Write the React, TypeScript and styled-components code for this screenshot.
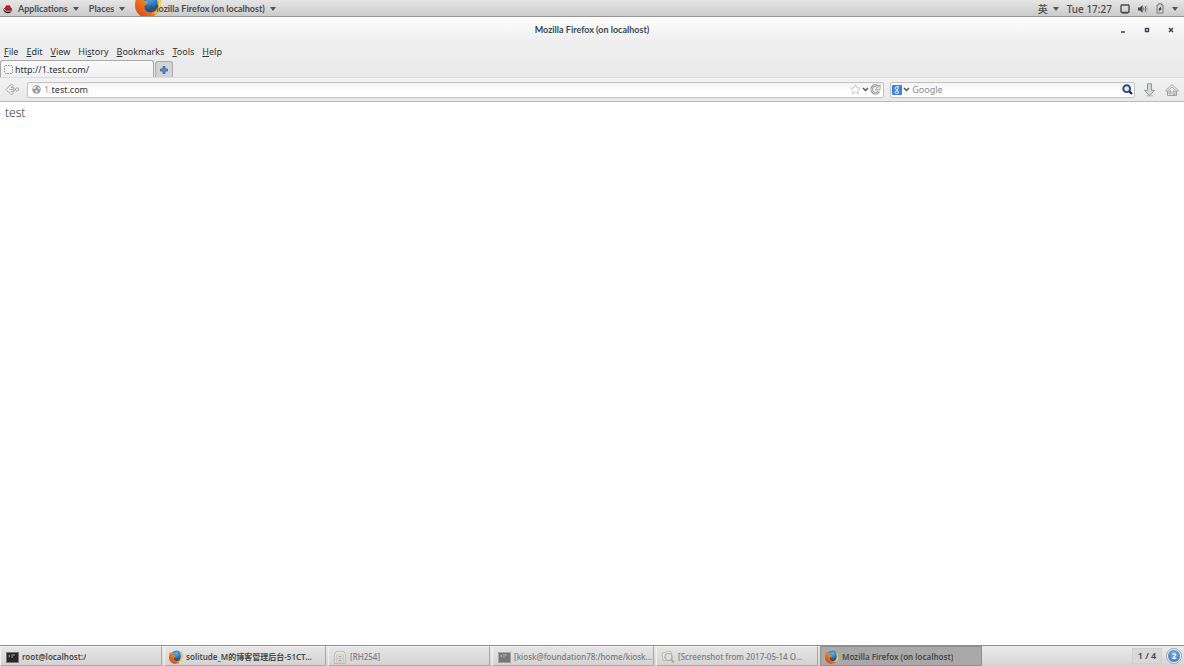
import React from "react";
import styled, { createGlobalStyle, css } from "styled-components";

const Global = createGlobalStyle`
  *, *::before, *::after { box-sizing: border-box; }
  html, body { margin: 0; padding: 0; }
  body, button, input {
    font-family: "Noto Sans", "Noto Sans CJK SC", sans-serif;
    font-size: 9px;
    line-height: 12px;
    color: #2e3436;
  }
  button { margin: 0; padding: 0; border: 0; background: none; white-space: nowrap; }
  svg { display: block; flex: none; }
`;

const Desktop = styled.div`
  display: flex;
  flex-direction: column;
  min-height: 100vh;
  background: #fff;
`;

const TopBar = styled.header`
  display: flex;
  justify-content: space-between;
  height: 17px;
  overflow: hidden;
  background: linear-gradient(#e6e6e6, #cbcbcb);
  border-bottom: 1px solid #989898;
`;

const BarGroup = styled.div<{ $gap: number; $pad: number }>`
  display: flex;
  align-items: center;
  gap: ${(p) => p.$gap}px;
  padding: 1px ${(p) => p.$pad}px 0;
`;

const PanelButton = styled.button<{ $wide?: boolean }>`
  display: flex;
  align-items: center;
  gap: 5px;
  height: 15px;
  font-family: ${(p) => (p.$wide ? '"Noto Sans", "Noto Sans CJK SC", sans-serif' : "Lato, sans-serif")};
  font-size: ${(p) => (p.$wide ? 10 : 9)}px;
  font-weight: ${(p) => (p.$wide ? 500 : 700)};
  color: #4c4c4c;
`;

const AppMenuButton = styled(PanelButton)`
  position: relative;
  padding-left: 15px;
`;

const AppIcon = styled.span`
  position: absolute;
  left: 0;
  top: -10px;
`;

const AppLabel = styled.span`
  position: relative;
`;

const TitleBar = styled.div`
  display: grid;
  grid-template-columns: 1fr auto 1fr;
  align-items: center;
  height: 26px;
  padding: 0 8px;
  background: linear-gradient(#fefefe, #ededed);
`;

const Title = styled.h1`
  grid-column: 2;
  margin: 0;
  font-family: Lato, sans-serif;
  font-size: 9px;
  line-height: 12px;
  font-weight: 700;
  color: #3b4b50;
`;

const WindowControls = styled.div`
  display: flex;
  justify-content: flex-end;
  gap: 14px;
`;

const MenuBar = styled.nav`
  display: flex;
  align-items: center;
  gap: 8px;
  height: 17px;
  padding: 0 4px;
  background: #ededed;
`;

const MenuItem = styled.button`
  color: #2e3436;
`;

const TabStrip = styled.div`
  display: flex;
  align-items: flex-end;
  gap: 1px;
  height: 18px;
  background: #ebebeb;
  border-bottom: 1px solid #dcdcdc;
`;

const Tab = styled.button`
  display: flex;
  align-items: center;
  gap: 2px;
  width: 154px;
  height: 17px;
  padding: 1px 3px 0;
  background: linear-gradient(#fafafa, #f0f0f0);
  border: 1px solid #a8a8a8;
  border-bottom: 0;
  border-radius: 3px 3px 0 0;
`;

const NewTab = styled.button`
  display: flex;
  align-items: center;
  justify-content: center;
  width: 18px;
  height: 16px;
  background: #d3d3d3;
  border: 1px solid #ababab;
  border-bottom: 0;
  border-radius: 3px 3px 0 0;
`;

const Toolbar = styled.div`
  display: flex;
  align-items: center;
  height: 24px;
  padding: 0 5px;
  background: linear-gradient(#f2f2f2, #e9e9e9);
  border-bottom: 1px solid #bdbdbd;
`;

const IconButton = styled.button`
  display: flex;
  align-items: center;
  justify-content: center;
`;

const Field = styled.div<{ $search?: boolean }>`
  display: flex;
  align-items: center;
  height: 16px;
  background: linear-gradient(#f3f3f3, #fff 60%);
  border: 1px solid #c3c3c3;
  border-radius: 2px;
  ${(p) =>
    p.$search
      ? css`
          flex: 0 1 245px;
          min-width: 120px;
          margin: 0 8px 0 6px;
          padding: 0 1px;
        `
      : css`
          flex: 1;
          min-width: 160px;
          margin-left: 8px;
          padding: 0 2px 0 4px;
        `}
`;

const FieldInput = styled.input`
  flex: 1;
  min-width: 0;
  height: 12px;
  padding: 0;
  border: 0;
  outline: 0;
  background: transparent;
  &::placeholder { color: #8b8e8f; opacity: 1; }
`;

const SubDomain = styled.span`
  margin-left: 3px;
  color: #a0a0a0;
`;

const IconRow = styled.div<{ $gap: number }>`
  display: flex;
  align-items: center;
  gap: ${(p) => p.$gap}px;
`;

const Page = styled.main`
  flex: 1;
  padding: 3px 5px;
`;

const PageText = styled.p`
  margin: 0;
  font-size: 12px;
  line-height: 16px;
  font-weight: 300;
  color: #333;
`;

const TaskBar = styled.footer`
  display: flex;
  align-items: stretch;
  height: 21px;
  background: linear-gradient(#ececec, #d4d4d4);
  border-top: 1px solid #8f8f8f;
`;

const TaskList = styled.div`
  display: flex;
  flex: 1;
  gap: 2px;
  min-width: 0;
`;

const Task = styled.button<{ $state?: "active" | "minimized" }>`
  display: flex;
  align-items: center;
  gap: 3px;
  flex: 0 1 162px;
  min-width: 0;
  padding: 2px 0 0 4px;
  font-size: 8px;
  font-weight: ${(p) => (p.$state === "minimized" ? 500 : 600)};
  color: ${(p) => (p.$state === "minimized" ? "#7c7c7c" : "#484848")};
  background: ${(p) => (p.$state === "active" ? "#a9a9a9" : "linear-gradient(#e6e6e6, #d4d4d4)")};
  border: 1px solid ${(p) => (p.$state === "active" ? "#8f8f8f" : "#a6a6a6")};
  border-top-color: ${(p) => (p.$state === "active" ? "#8f8f8f" : "#f2f2f2")};
  border-left-color: ${(p) => (p.$state === "active" ? "#8f8f8f" : "#f2f2f2")};
  svg { opacity: ${(p) => (p.$state === "minimized" ? 0.55 : 1)}; }
`;

const TaskIcon = styled.span`
  display: flex;
  flex: none;
  justify-content: center;
  width: 14px;
`;

const TaskLabel = styled.span`
  overflow: hidden;
  text-overflow: ellipsis;
`;

const Workspace = styled.button`
  align-self: center;
  width: 30px;
  height: 16px;
  background: #d9d9d9;
  border: 1px solid #d0d0d0;
  font-weight: 600;
  color: #454545;
`;

const Notice = styled.button`
  align-self: center;
  width: 14px;
  height: 14px;
  margin: 0 3px 0 5px;
  border: 1px solid #f4f4f4;
  border-radius: 50%;
  outline: 1px solid #a2a9b2;
  background: radial-gradient(circle at 50% 30%, #79aee6, #2d6fc0);
  font-size: 8px;
  font-weight: 700;
  line-height: 12px;
  color: #fff;
`;

const Caret = () => (
  <svg width="6" height="4" viewBox="0 0 6 4"><path d="M0 0h6L3 4z" fill="#555" /></svg>
);

const Chevron = () => (
  <svg width="7" height="5" viewBox="0 0 7 5"><path d="M1 1l2.5 2.5L6 1" fill="none" stroke="#555" strokeWidth="1.5" /></svg>
);

const Firefox = ({ size, id }: { size: number; id: string }) => (
  <svg width={size} height={size} viewBox="0 0 28 28">
    <defs>
      <radialGradient id={`${id}g`} cx="50%" cy="25%" r="75%">
        <stop offset="0" stopColor="#59b5e8" /><stop offset=".6" stopColor="#1a62ae" /><stop offset="1" stopColor="#10346f" />
      </radialGradient>
      <linearGradient id={`${id}f`} x1="0" y1="1" x2="1" y2="0">
        <stop offset="0" stopColor="#d63a16" /><stop offset=".5" stopColor="#ee7a1b" /><stop offset="1" stopColor="#ffda45" />
      </linearGradient>
    </defs>
    <circle cx="15" cy="13" r="12" fill={`url(#${id}g)`} />
    <path d="M2 4c1 2 2 2 3 2 2-1 5-1 7 0-2 1-3 2-3 4l4 1c1 1 0 3-3 4-1 4 2 7 6 7 4 0 6-3 7-6 1-4 0-8-3-12 4 3 6 7 6 11 0 7-6 13-14 13C6 28 0 22 0 15 0 11 1 7 2 4z" fill={`url(#${id}f)`} />
    <path d="M20 3c5 4 6 9 4 14-1 4-4 6-7 7 6 0 10-4 10-10S25 5 20 3z" fill="#ffdc4c" />
  </svg>
);

const RedHat = () => (
  <svg width="10" height="10" viewBox="0 0 10 10">
    <circle cx="5" cy="5" r="4.5" fill="#eee" />
    <path d="M.5 4.5C1 7 4 8 6 8c2 0 3-1 3.500-2C9 8 7 9.500 5 9.300 2 9 0 7 .5 4.500z" fill="#161616" />
    <path d="M1 4.700C1 3.500 2 3.800 2.300 3c.4-1.500 1-2 2.200-1.600C6 1 7.500 1.400 7.800 3.500c1 .4 1.500 1 1.200 2C7.500 7.500 2 6.700 1 4.700z" fill="#c41925" />
    <path d="M.7 4.600C2 7 7 7.800 9.200 5.500 9 8 3 8.500.7 4.600z" fill="#161616" />
  </svg>
);

const InputSquare = () => (
  <svg width="10" height="10" viewBox="0 0 10 10"><rect x="1" y="1" width="8" height="7.500" rx="1" fill="none" stroke="#4b4b4b" strokeWidth="1.400" /><path d="M2 9h6M1 1h1M8 1h1" stroke="#4b4b4b" /></svg>
);

const Volume = () => (
  <svg width="10" height="10" viewBox="0 0 10 10"><path d="M0 3.500h2L4.500 1v8L2 6.500H0z" fill="#444" /><path d="M5.500 3.500q1 1.500 0 3M7 2.200q2 2.800 0 5.600" stroke="#666" fill="none" /><path d="M8.300 1q2.600 4 0 8" stroke="#aaa" fill="none" strokeWidth=".8" /></svg>
);

const Battery = () => (
  <svg width="8" height="11" viewBox="0 0 8 11"><path d="M1 2h1.500V.7h3V2H7v8H1z" fill="#dadada" stroke="#777" /><path d="M5.500 3L2 6.500h1.600L2.800 9 6 5.500H4.500z" fill="#333" /></svg>
);

const Back = () => (
  <svg width="14" height="13" viewBox="0 0 14 13"><path d="M6.500 1L1 6.500 6.500 12 8 10.500 6 8.300h3V4.700H6l2-2.200z" fill="#f4f4f4" stroke="#a3a3a3" /><path d="M4 6.500h5" stroke="#b0b0b0" /><rect x="10.500" y="5" width="3" height="3" rx="1" fill="#eee" stroke="#aaa" /></svg>
);

const Globe = () => (
  <svg width="9" height="9" viewBox="0 0 9 9"><circle cx="4.500" cy="4.500" r="4.200" fill="#9a9a9a" /><path d="M1 2.500L3 1l1.500.7L4 3 2.500 4 1 3.700zM5.500 1.500L8 3 7.500 4.500 6 4zM3.500 5l2 .5.200 1L4.500 8 3.500 7z" fill="#e8e8e8" /></svg>
);

const Star = () => (
  <svg width="11" height="11" viewBox="0 0 11 11"><path d="M5.500.8l1.400 3 3.300.4-2.400 2.300.6 3.300-2.900-1.600-2.900 1.600.6-3.300L.8 4.200l3.300-.4z" fill="#fff" stroke="#c4c4c4" strokeWidth=".9" /></svg>
);

const Reload = () => (
  <svg width="11" height="11" viewBox="0 0 11 11"><path d="M8.800 7.300A3.800 3.800 0 1 1 8 2.600" fill="none" stroke="#8c8c8c" strokeWidth="2.600" /><path d="M8.800 7.300A3.800 3.800 0 1 1 8 2.600" fill="none" stroke="#eee" strokeWidth="1" /><path d="M10 .8v5H5z" fill="#eee" stroke="#8c8c8c" strokeWidth=".8" /></svg>
);

const GoogleMark = () => (
  <svg width="10" height="10" viewBox="0 0 10 10"><rect width="10" height="10" rx="1" fill="#3f7ff0" /><ellipse cx="4.700" cy="3.200" rx="1.500" ry="1.400" fill="none" stroke="#fff" /><path d="M5.500 1.500H7M5 4.600L4.600 5.500 6 6.300" fill="none" stroke="#fff" strokeWidth=".9" /><ellipse cx="4.800" cy="7.300" rx="1.900" ry="1.200" fill="none" stroke="#fff" strokeWidth=".9" /></svg>
);

const Magnifier = () => (
  <svg width="11" height="11" viewBox="0 0 11 11"><circle cx="4.700" cy="4.700" r="3.400" fill="#e3ebff" stroke="#2c448f" strokeWidth="1.900" /><path d="M7.500 7.500L10 10" stroke="#222" strokeWidth="2.200" /></svg>
);

const Download = () => (
  <svg width="13" height="14" viewBox="0 0 13 14"><ellipse cx="6.500" cy="12.700" rx="4" ry="1" fill="#ccc" /><path d="M4.500.8h4v6.500h3l-5 5.500-5-5.500h3z" fill="#d5d8d8" stroke="#929696" /></svg>
);

const Home = () => (
  <svg width="14" height="14" viewBox="0 0 14 14"><path d="M2.500 7v5.500h9V7L7 3z" fill="#f4f4f4" stroke="#a0a0a0" /><path d="M.7 7.500L7 1.500l6.300 6-1.300 1L7 4 2 8.500z" fill="#eee" stroke="#969696" strokeWidth=".8" /><path d="M4 8h2v3H4zM8 8h2v4H8z" fill="#ddd" stroke="#999" strokeWidth=".8" /></svg>
);

const TerminalIcon = () => (
  <svg width="13" height="11" viewBox="0 0 13 11"><rect x=".5" y=".5" width="12" height="10" fill="#252829" stroke="#777" /><path d="M2.500 3l1.500 1-1.500 1M5 5h2M6 2v2M8 2v2" fill="none" stroke="#b8bcb8" strokeWidth=".8" /></svg>
);

const Cabinet = () => (
  <svg width="12" height="13" viewBox="0 0 12 13"><path d="M2 .5h8l1.500 3v9H.5v-9z" fill="#e9e9e2" stroke="#a4a49c" /><path d="M2.500 4h7v3h-7zM2.500 8h7v3h-7z" fill="#f6f6f0" stroke="#a4a49c" strokeWidth=".8" /><path d="M4.500 5.500h3M4.500 9.500h3" stroke="#777" /></svg>
);

const ImageViewer = () => (
  <svg width="14" height="14" viewBox="0 0 14 14"><path d="M1 3l9-2 1 8-9 2z" fill="#f2eee0" stroke="#aaa18d" /><path d="M3 8l2-3 3 2z" fill="#b7ad8b" /><circle cx="7.500" cy="7" r="3.500" fill="#dce5df" stroke="#888" strokeWidth="1.200" /><path d="M10 9.500l3 3" stroke="#888" strokeWidth="2" /></svg>
);

const menus: [string, string, string][] = [
  ["", "F", "ile"], ["", "E", "dit"], ["", "V", "iew"], ["Hi", "s", "tory"],
  ["", "B", "ookmarks"], ["", "T", "ools"], ["", "H", "elp"],
];

const tasks: { label: string; icon: React.ReactNode; state?: "active" | "minimized" }[] = [
  { label: "root@localhost:/", icon: <TerminalIcon /> },
  { label: "solitude_M的博客管理后台-51CT...", icon: <Firefox size={14} id="blog" /> },
  { label: "[RH254]", icon: <Cabinet />, state: "minimized" },
  { label: "[kiosk@foundation78:/home/kiosk...", icon: <TerminalIcon />, state: "minimized" },
  { label: "[Screenshot from 2017-05-14 O...", icon: <ImageViewer />, state: "minimized" },
  { label: "Mozilla Firefox (on localhost)", icon: <Firefox size={14} id="current" />, state: "active" },
];

export default function App() {
  return (
    <Desktop>
      <Global />
      <TopBar>
        <BarGroup $gap={10} $pad={3}>
          <PanelButton><RedHat />Applications <Caret /></PanelButton>
          <PanelButton>Places <Caret /></PanelButton>
          <AppMenuButton>
            <AppIcon><Firefox size={27} id="panel" /></AppIcon>
            <AppLabel>Mozilla Firefox (on localhost)</AppLabel>
            <Caret />
          </AppMenuButton>
        </BarGroup>
        <BarGroup $gap={8} $pad={6}>
          <PanelButton $wide>英 <Caret /></PanelButton>
          <PanelButton $wide>Tue 17:27</PanelButton>
          <IconButton aria-label="Input"><InputSquare /></IconButton>
          <IconButton aria-label="Volume"><Volume /></IconButton>
          <IconButton aria-label="Battery"><Battery /></IconButton>
          <IconButton aria-label="System menu"><Caret /></IconButton>
        </BarGroup>
      </TopBar>
      <TitleBar>
        <Title>Mozilla Firefox (on localhost)</Title>
        <WindowControls>
          <IconButton aria-label="Minimize"><svg width="10" height="8" viewBox="0 0 10 8"><path d="M3 6h4" stroke="#36474d" strokeWidth="1.500" /></svg></IconButton>
          <IconButton aria-label="Maximize"><svg width="10" height="8" viewBox="0 0 10 8"><path d="M3.500 2.500h3v3h-3z" fill="none" stroke="#36474d" strokeWidth="1.400" /></svg></IconButton>
          <IconButton aria-label="Close"><svg width="10" height="8" viewBox="0 0 10 8"><path d="M3 2l4 4M7 2L3 6" stroke="#36474d" strokeWidth="1.500" /></svg></IconButton>
        </WindowControls>
      </TitleBar>
      <MenuBar>
        {menus.map(([before, key, after]) => (
          <MenuItem key={key + after}>{before}<u>{key}</u>{after}</MenuItem>
        ))}
      </MenuBar>
      <TabStrip>
        <Tab>
          <svg width="9" height="9" viewBox="0 0 9 9"><rect x=".5" y=".5" width="8" height="8" rx="1" fill="none" stroke="#858585" strokeDasharray="1.500 1" /></svg>
          http://1.test.com/
        </Tab>
        <NewTab aria-label="New tab">
          <svg width="8" height="8" viewBox="0 0 8 8"><path d="M3 .5h2V3h2.500v2H5v2.500H3V5H.5V3H3z" fill="#5c8fd0" stroke="#355f9f" strokeWidth=".8" /></svg>
        </NewTab>
      </TabStrip>
      <Toolbar>
        <IconButton aria-label="Back"><Back /></IconButton>
        <Field>
          <Globe />
          <SubDomain>1.</SubDomain>
          <FieldInput aria-label="Address" defaultValue="test.com" />
          <IconRow $gap={1}>
            <IconButton aria-label="Bookmark"><Star /></IconButton>
            <IconButton aria-label="Address history"><Chevron /></IconButton>
            <IconButton aria-label="Reload"><Reload /></IconButton>
          </IconRow>
        </Field>
        <Field $search>
          <IconButton aria-label="Search engine"><GoogleMark />&#8202;<Chevron />&nbsp;</IconButton>
          <FieldInput aria-label="Search" placeholder="Google" />
          <IconButton aria-label="Search"><Magnifier /></IconButton>
        </Field>
        <IconRow $gap={9}>
          <IconButton aria-label="Downloads"><Download /></IconButton>
          <IconButton aria-label="Home"><Home /></IconButton>
        </IconRow>
      </Toolbar>
      <Page><PageText>test</PageText></Page>
      <TaskBar>
        <TaskList>
          {tasks.map((task) => (
            <Task key={task.label} $state={task.state}>
              <TaskIcon>{task.icon}</TaskIcon>
              <TaskLabel>{task.label}</TaskLabel>
            </Task>
          ))}
        </TaskList>
        <Workspace>1 / 4</Workspace>
        <Notice>2</Notice>
      </TaskBar>
    </Desktop>
  );
}
